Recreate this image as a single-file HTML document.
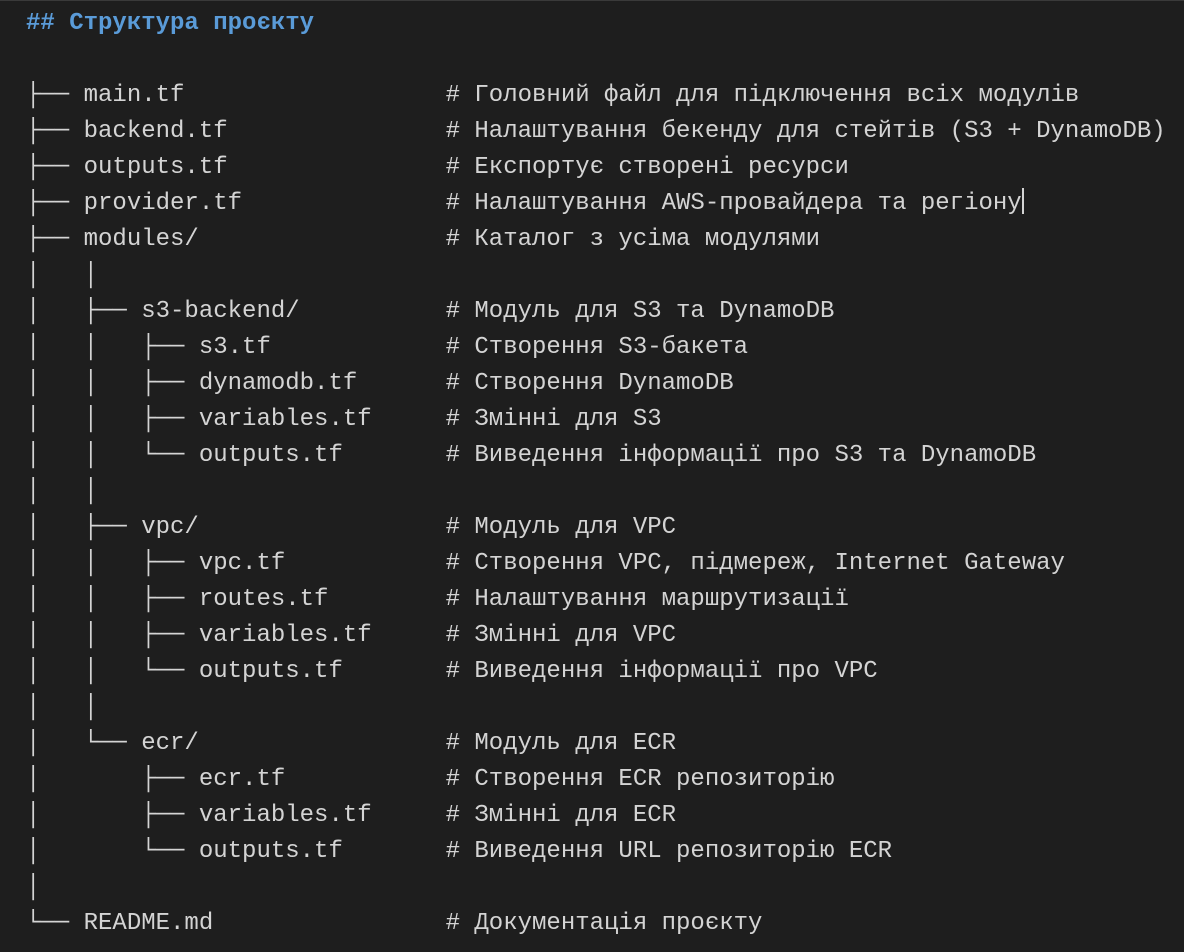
<!DOCTYPE html>
<html><head><meta charset="utf-8"><style>
html,body{margin:0;padding:0;background:#1e1e1e;width:1184px;height:952px;overflow:hidden}
body{border-top:1px solid #3a3a3a;box-sizing:border-box}
.w{padding:5px 0 0 26px;font-family:"Liberation Mono","DejaVu Sans Mono",monospace;font-size:24px;line-height:36px;color:#d4d4d4}
.l{height:36px;white-space:pre}
.a{display:inline-block;width:419.6px;white-space:pre}
.h{color:#5a9bd8;font-weight:bold}
.cur{display:inline-block;width:2px;height:26px;background:#d4d4d4;vertical-align:-5px}
</style></head><body><div class="w">
<div class="l h">## Структура проєкту</div>
<div class="l"></div>
<div class="l"><span class="a">├── main.tf</span># Головний файл для підключення всіх модулів</div>
<div class="l"><span class="a">├── backend.tf</span># Налаштування бекенду для стейтів (S3 + DynamoDB)</div>
<div class="l"><span class="a">├── outputs.tf</span># Експортує створені ресурси</div>
<div class="l"><span class="a">├── provider.tf</span># Налаштування AWS-провайдера та регіону<span class="cur"></span></div>
<div class="l"><span class="a">├── modules/</span># Каталог з усіма модулями</div>
<div class="l">│   │</div>
<div class="l"><span class="a">│   ├── s3-backend/</span># Модуль для S3 та DynamoDB</div>
<div class="l"><span class="a">│   │   ├── s3.tf</span># Створення S3-бакета</div>
<div class="l"><span class="a">│   │   ├── dynamodb.tf</span># Створення DynamoDB</div>
<div class="l"><span class="a">│   │   ├── variables.tf</span># Змінні для S3</div>
<div class="l"><span class="a">│   │   └── outputs.tf</span># Виведення інформації про S3 та DynamoDB</div>
<div class="l">│   │</div>
<div class="l"><span class="a">│   ├── vpc/</span># Модуль для VPC</div>
<div class="l"><span class="a">│   │   ├── vpc.tf</span># Створення VPC, підмереж, Internet Gateway</div>
<div class="l"><span class="a">│   │   ├── routes.tf</span># Налаштування маршрутизації</div>
<div class="l"><span class="a">│   │   ├── variables.tf</span># Змінні для VPC</div>
<div class="l"><span class="a">│   │   └── outputs.tf</span># Виведення інформації про VPC</div>
<div class="l">│   │</div>
<div class="l"><span class="a">│   └── ecr/</span># Модуль для ECR</div>
<div class="l"><span class="a">│       ├── ecr.tf</span># Створення ECR репозиторію</div>
<div class="l"><span class="a">│       ├── variables.tf</span># Змінні для ECR</div>
<div class="l"><span class="a">│       └── outputs.tf</span># Виведення URL репозиторію ECR</div>
<div class="l">│</div>
<div class="l"><span class="a">└── README.md</span># Документація проєкту</div>
</div></body></html>
